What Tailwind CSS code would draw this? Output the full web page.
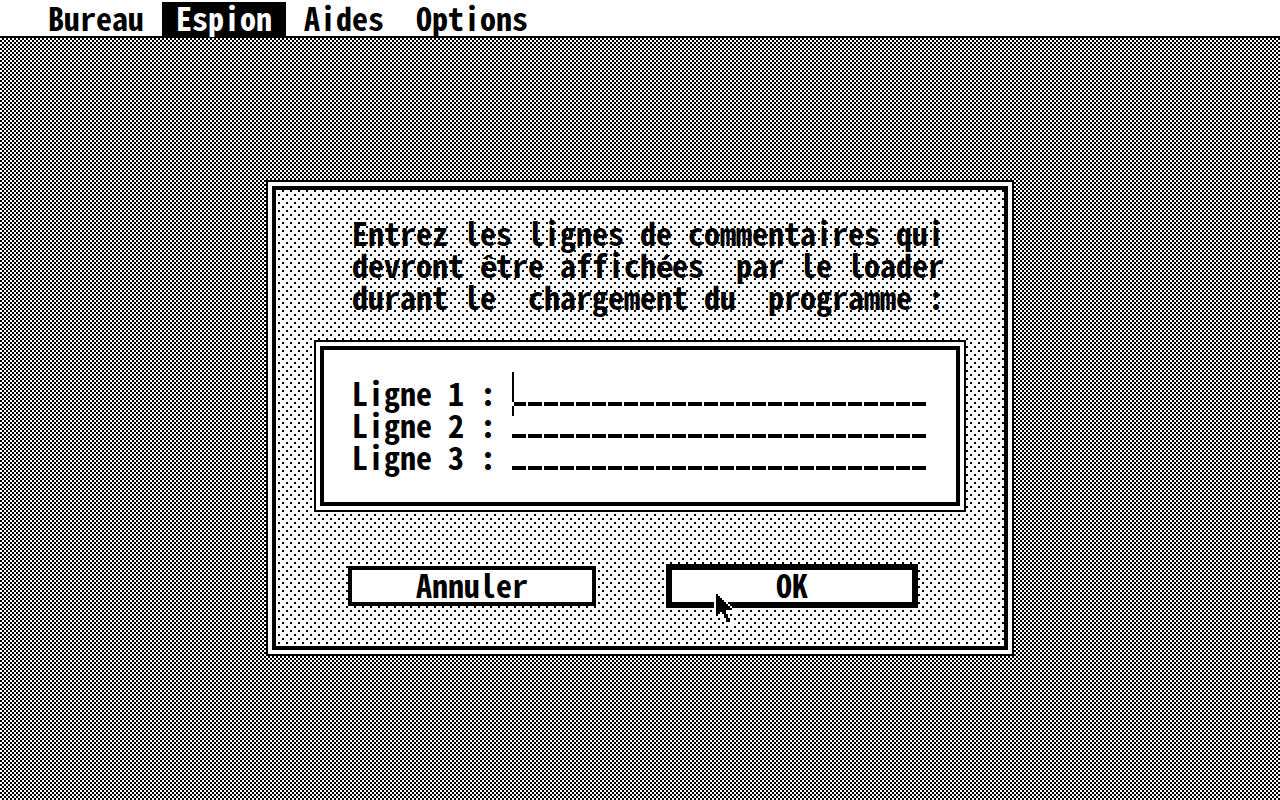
<!DOCTYPE html>
<html lang="fr">
  <head>
    <meta charset="utf-8" />
    <meta name="viewport" content="width=device-width, initial-scale=1" />
    <title>Espion</title>
    <script src="https://cdn.jsdelivr.net/npm/@tailwindcss/browser@4"></script>
  </head>
  <body
    class="flex flex-col min-h-screen bg-white text-black font-bold text-[32px] leading-8 font-['Noto_Sans_Mono_CJK_SC','Noto_Sans_Mono_CJK_JP','DejaVu_Sans_Mono',monospace]"
  >
    <nav class="flex border-b-2 border-black bg-white pt-[2px] pl-8">
      <a href="#" class="mx-[2px] px-[14px] pb-1 leading-[30px]">Bureau</a>
      <a href="#" class="mx-[2px] px-[14px] pb-1 leading-[30px] bg-black text-white">Espion</a>
      <a href="#" class="mx-[2px] px-[14px] pb-1 leading-[30px]">Aides</a>
      <a href="#" class="mx-[2px] px-[14px] pb-1 leading-[30px]">Options</a>
    </nav>

    <main
      class="flex flex-1 items-center justify-center pb-[2px] bg-[repeating-conic-gradient(#000_0_25%,#fff_0_50%)] bg-[length:4px_4px]"
    >
      <form class="w-[748px] border-2 border-black bg-white p-1">
        <div
          class="border-4 border-black px-[38px] pt-[26px] pb-[38px] bg-[conic-gradient(at_2px_2px,transparent_270deg,#000_0),conic-gradient(at_2px_2px,transparent_270deg,#000_0)] bg-[length:8px_8px] bg-[position:6px_0,2px_4px]"
        >
          
          <p class="pl-[38px] whitespace-pre">Entrez les lignes de commentaires qui
devront <span class="inline-block w-4 leading-4 font-[Roboto,sans-serif]">ê</span>tre affich<span class="inline-block w-4 leading-4 font-[Roboto,sans-serif]">é</span>es  par le loader
durant le  chargement du  programme :</p>

          <div class="mt-7 border-2 border-black bg-white p-1">
            <div class="border-4 border-black pl-7 pr-[30px] pt-[26px] pb-[30px]">
              <div class="relative flex">
                <label for="ligne1" class="w-40 whitespace-pre">Ligne 1 :</label>
                <input
                  id="ligne1"
                  type="text"
                  maxlength="26"
                  class="w-[414px] h-8 outline-none bg-[repeating-linear-gradient(90deg,#000_0_14px,#fff_14px_16px)] bg-[length:100%_4px] bg-[position:0_26px] bg-no-repeat"
                />
                <!-- text cursor, inverted where it crosses the dashes -->
                <span
                  class="absolute left-40 -top-1 w-[2px] h-11 bg-[linear-gradient(#000_30px,#fff_30px_34px,#000_34px)]"
                ></span>
              </div>
              <div class="flex">
                <label for="ligne2" class="w-40 whitespace-pre">Ligne 2 :</label>
                <input
                  id="ligne2"
                  type="text"
                  maxlength="26"
                  class="w-[414px] h-8 outline-none bg-[repeating-linear-gradient(90deg,#000_0_14px,#fff_14px_16px)] bg-[length:100%_4px] bg-[position:0_26px] bg-no-repeat"
                />
              </div>
              <div class="flex">
                <label for="ligne3" class="w-40 whitespace-pre">Ligne 3 :</label>
                <input
                  id="ligne3"
                  type="text"
                  maxlength="26"
                  class="w-[414px] h-8 outline-none bg-[repeating-linear-gradient(90deg,#000_0_14px,#fff_14px_16px)] bg-[length:100%_4px] bg-[position:0_26px] bg-no-repeat"
                />
              </div>
            </div>
          </div>

          <div class="mt-[52px] flex items-center justify-between pl-[34px] pr-12">
            <button type="button" class="w-[248px] border-4 border-black bg-white pb-1 leading-7">
              Annuler
            </button>
            <div class="relative">
              <button type="button" class="block w-[252px] border-6 border-black bg-white pb-1 leading-7">
                OK
              </button>
              <!-- mouse pointer -->
              <svg
                class="absolute left-12 top-7 w-8 h-8"
                viewBox="0 0 16 16"
                shape-rendering="crispEdges"
              >
                <path
                  fill="#fff"
                  d="M0 0h2v1h1v1h1v1h1v1h1v1h1v1h1v1h1v1h1v1h1v1h-4v1h1v2h1v3h-3v-1h-1v-2h-1v-2h-1v1h-1v1h-1v1h-1z"
                />
                <path
                  d="M1 1h1v1h1v1h1v1h1v1h1v1h1v1h1v1h1v1h-3v2h1v2h1v2h-2v-2h-1v-2h-1v-1h-1v1h-1v1h-1z"
                />
              </svg>
            </div>
          </div>
        </div>
      </form>
    </main>
  </body>
</html>
